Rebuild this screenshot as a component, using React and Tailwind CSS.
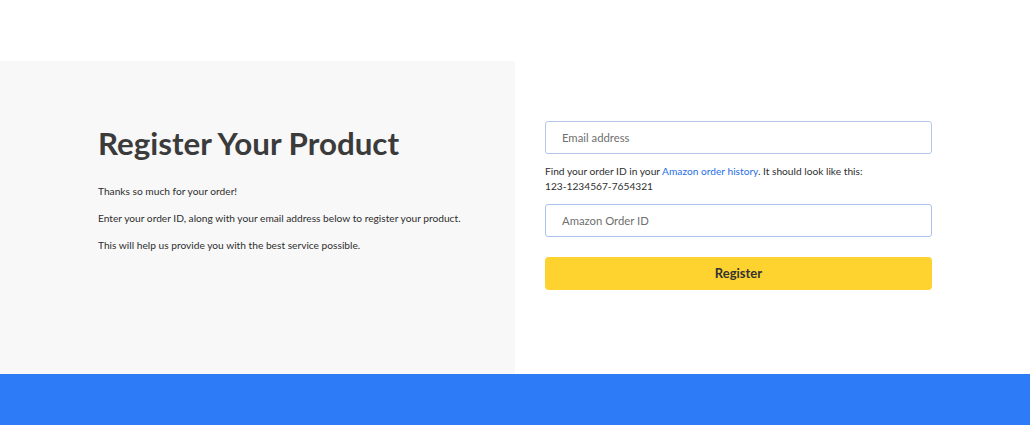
export default function App() {
  return (
    <div className="flex h-[425px] w-[1030px] flex-col bg-white font-['Lato','Liberation_Sans',sans-serif]">
      <div className="h-[61px] shrink-0" />

      <div className="flex h-[313px] shrink-0">
        {/* Intro panel */}
        <div className="flex w-[515px] flex-col bg-[#f8f8f8] pl-[98px] pt-[62px]">
          <h1 className="text-[31.3px] font-bold leading-[40px] text-[#3b3b3b]">Register Your Product</h1>
          <div className="mt-[21px] flex flex-col gap-[13px] text-[10.2px] leading-[14px] text-[#2e2e2e]">
            <p>Thanks so much for your order!</p>
            <p>Enter your order ID, along with your email address below to register your product.</p>
            <p>This will help us provide you with the best service possible.</p>
          </div>
        </div>

        {/* Form */}
        <div className="flex flex-col pl-[30px] pt-[60px]">
          <input
            type="email"
            placeholder="Email address"
            className="h-[33px] w-[387px] rounded-[3px] border border-[#b4c7e8] bg-white px-4 text-[11.3px] text-[#333] outline-none placeholder:text-[#6f6f6f]"
          />
          <p className="mt-[10px] text-[10.2px] leading-[15px] text-[#2e2e2e]">
            Find your order ID in your <span className="text-[#1f6fe8]">Amazon order history</span>. It should look like this:
            <br />
            123-1234567-7654321
          </p>
          <input
            type="text"
            placeholder="Amazon Order ID"
            className="mt-[10px] h-[33px] w-[387px] rounded-[3px] border border-[#a9c1ec] bg-white px-4 text-[11.3px] text-[#333] outline-none placeholder:text-[#6f6f6f]"
          />
          <button className="mt-[20px] h-[33px] w-[387px] rounded-[4px] bg-[#ffd32f] text-[13px] font-bold text-[#333]">
            Register
          </button>
        </div>
      </div>

      <div className="flex-1 bg-[#2d7bf6]" />
    </div>
  )
}
